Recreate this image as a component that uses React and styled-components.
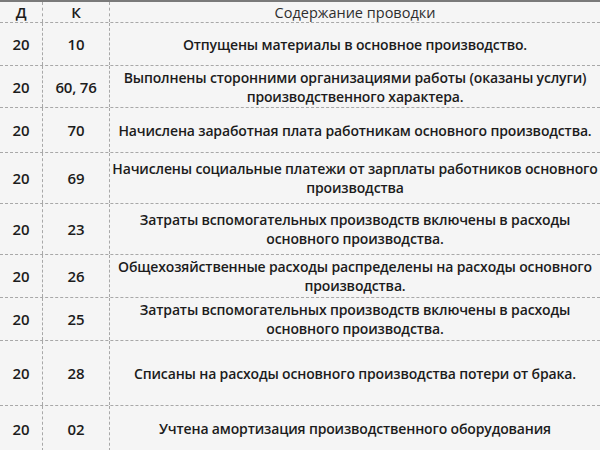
import React from 'react';
import styled, { createGlobalStyle } from "styled-components"

const rows = [
  { d: '20', k: '10', h: 43, text: ['Отпущены материалы в основное производство.'] },
  { d: '20', k: '60, 76', h: 42, text: ['Выполнены сторонними организациями работы (оказаны услуги)', 'производственного характера.'] },
  { d: '20', k: '70', h: 45, text: ['Начислена заработная плата работникам основного производства.'] },
  { d: '20', k: '69', h: 51, text: ['Начислены социальные платежи от зарплаты работников основного', 'производства'] },
  { d: '20', k: '23', h: 51, text: ['Затраты вспомогательных производств включены в расходы', 'основного производства.'] },
  { d: '20', k: '26', h: 43, text: ['Общехозяйственные расходы распределены на расходы основного', 'производства.'] },
  { d: '20', k: '25', h: 43, text: ['Затраты вспомогательных производств включены в расходы', 'основного производства.'] },
  { d: '20', k: '28', h: 65, text: ['Списаны на расходы основного производства потери от брака.'] },
  { d: '20', k: '02', h: 46, text: ['Учтена амортизация производственного оборудования'] },
]

function App() {
  return (
    <>
      <Global />
      <Table>
        <Row h={21}>
          <Cell bold>Д</Cell>
          <Cell bold>К</Cell>
          <Cell last header>Содержание проводки</Cell>
        </Row>
        {rows.map((r, i) => (
          <Row key={i} h={r.h}>
            <Cell bold>{r.d}</Cell>
            <Cell bold>{r.k}</Cell>
            <Cell last>
              <Text>
                {r.text.map((t, j) => <span key={j}>{t}</span>)}
              </Text>
            </Cell>
          </Row>
        ))}
      </Table>
    </>
  )
}

const Global = createGlobalStyle`
  body {
    margin: 0;
    background: #f5f5f5;
  }
`
const Table = styled.div`
  width: 600px;
  height: 450px;
  overflow: hidden;
  border-top: 2px solid #7a7a7a;
  box-sizing: border-box;
  font-family: "Open Sans", "Liberation Sans", sans-serif;
  color: #1c1c1c;
  background: #f5f5f5;
`
const Row = styled.div`
  display: grid;
  grid-template-columns: 43px 67px 1fr;
  height: ${p => p.h}px;
  box-sizing: border-box;
  border-bottom: 1px dashed #a8a8a8;
`
const Cell = styled.div`
  display: flex;
  align-items: center;
  justify-content: center;
  text-align: center;
  font-size: ${p => p.bold ? '15px' : p.header ? '14.5px' : '14px'};
  font-weight: ${p => p.header ? 400 : 600};
  color: ${p => p.header ? '#2e2e2e' : '#1c1c1c'};
  border-right: ${p => p.last ? 'none' : '1px dashed #a8a8a8'};
  letter-spacing: ${p => p.header ? '0' : '-0.2px'};
`
const Text = styled.div`
  display: flex;
  flex-direction: column;
  align-items: center;
  line-height: 19px;
  font-size: 14px;
  letter-spacing: -0.15px;
`

export default App
